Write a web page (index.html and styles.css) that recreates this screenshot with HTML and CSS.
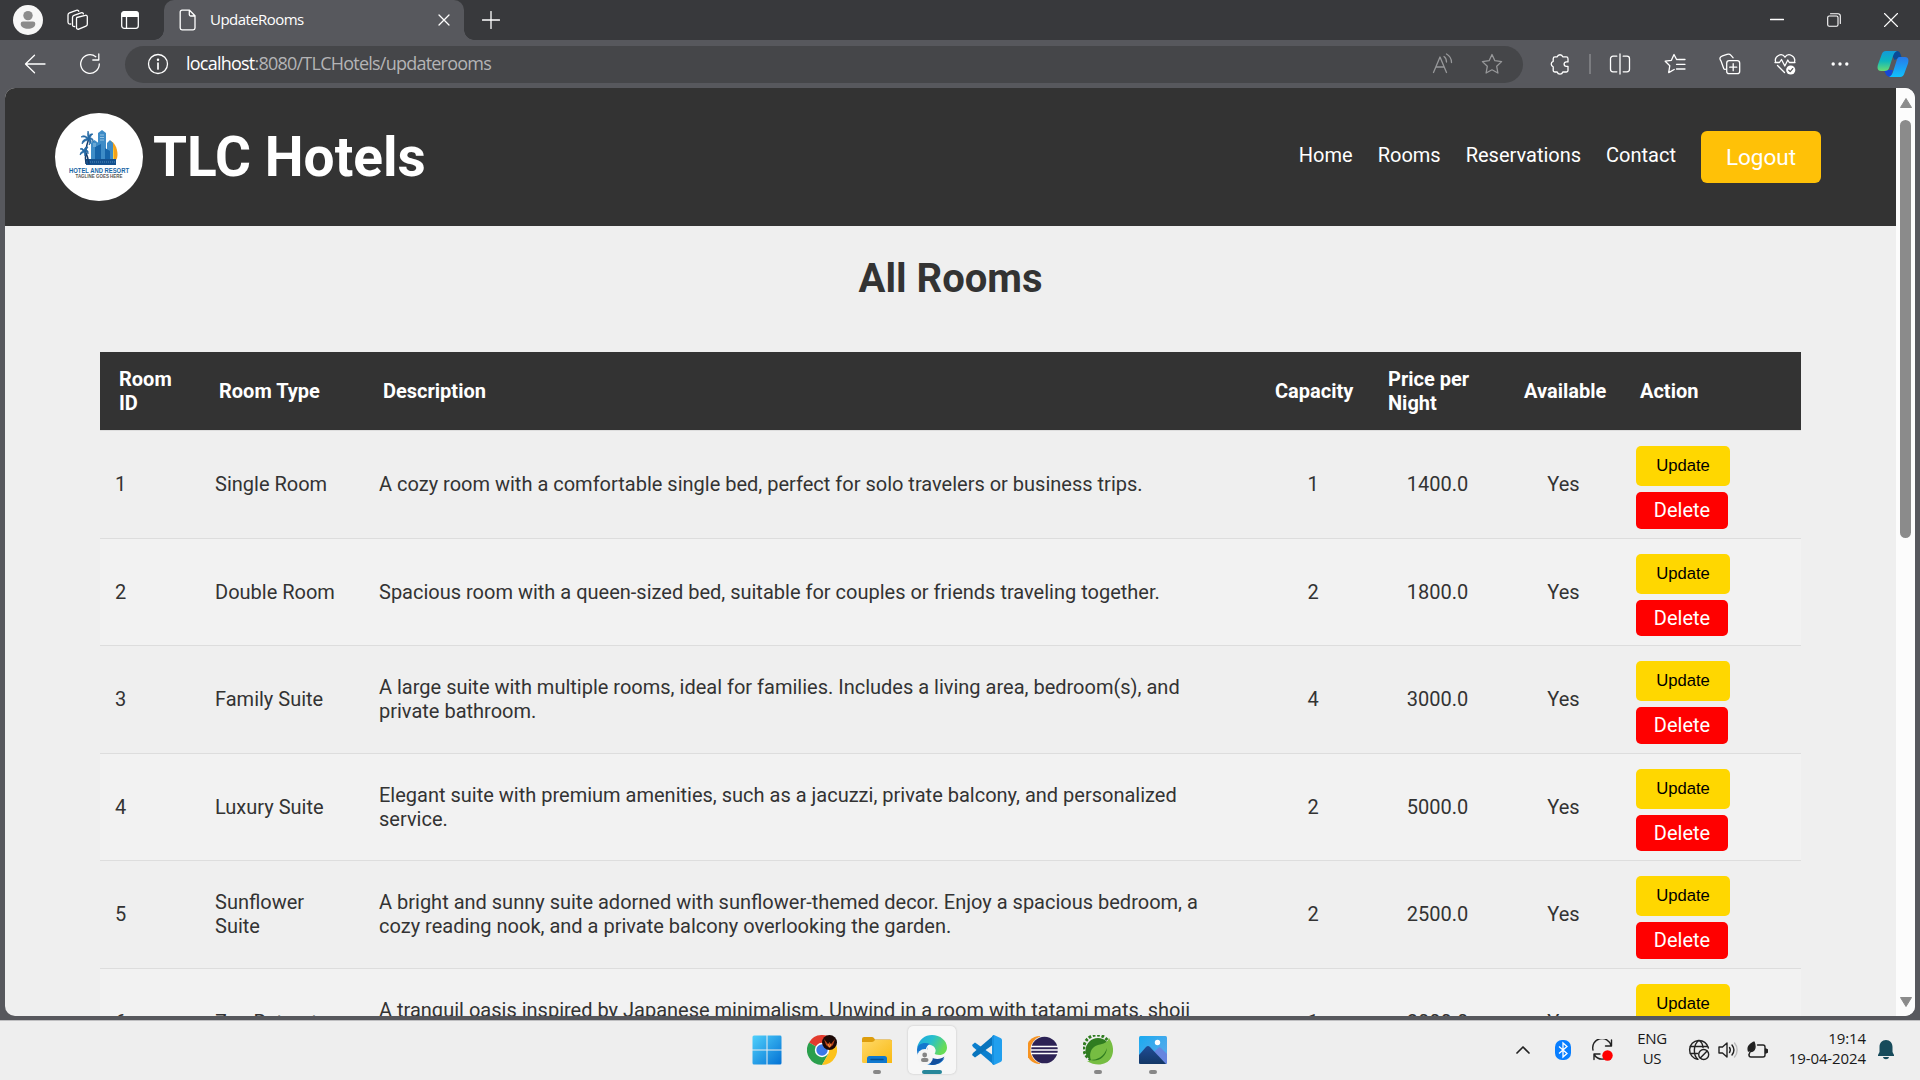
FILE: index.html
```html
<!DOCTYPE html>
<html lang="en">
<head>
<meta charset="utf-8">
<title>UpdateRooms</title>
<link rel="stylesheet" href="styles.css">
</head>
<body>
<div class="tabstrip">
  <div class="profile"><svg width="30" height="30" viewBox="0 0 30 30"><circle cx="15" cy="15" r="15" fill="#f7f7f7"/><circle cx="15" cy="10.600" r="4.700" fill="#8c8c8c"/><path d="M10 16.500h10a2.300 2.300 0 0 1 2.300 2.300c0 3.500-3.300 5-7.300 5s-7.300-1.500-7.300-5A2.300 2.300 0 0 1 10 16.500z" fill="#8c8c8c"/></svg></div>
  <div class="strip-icon"><svg class="line" width="22" height="22" viewBox="0 0 22 22"><path d="M9.700 8.500l8.600-2.200a1.500 1.500 0 0 1 2 1.400v7.500c0 1-.5 1.600-1.300 1.900l-7.200 3a1.600 1.600 0 0 1-2.300-1.500v-8.200c0-1 0-1.600.2-1.900z"/><path d="M7.700 17.500c-1.200.2-2.200-.3-2.200-1.600V8.500c0-1 .5-1.700 1.500-2.100l7-2.600c1.200-.4 2.200 0 2.400 1"/><path d="M3.700 15C2.200 15.300 1 14.600 1 13V6c0-1 .5-1.700 1.500-2.100l6.800-2.600c1.200-.4 2.200 0 2.500 1"/></svg></div>
  <div class="strip-icon tabact"><svg width="20" height="20" viewBox="0 0 20 20"><rect x="1.700" y="1.700" width="16.600" height="16.600" rx="2.500" fill="none" stroke="#fff" stroke-width="1.300"/><path d="M1.500 7V3.500a2 2 0 0 1 2-2h13a2 2 0 0 1 2 2V7z" fill="#fff"/><path d="M6.500 7v11" stroke="#fff" stroke-width="1.300"/></svg></div>
  <div class="tab">
    <svg class="line" width="18" height="22" viewBox="0 0 18 22"><path d="M3 1.200h7.500l5.500 5.500V19a1.800 1.800 0 0 1-1.800 1.800H3A1.800 1.800 0 0 1 1.200 19V3A1.800 1.800 0 0 1 3 1.200zM10.300 1.200V5.500a1.500 1.500 0 0 0 1.500 1.500H16"/></svg>
    <span class="tab-title">UpdateRooms</span>
    <svg class="line" width="12" height="12" viewBox="0 0 12 12"><path d="M1 1l10 10M11 1L1 11"/></svg>
  </div>
  <div class="newtab"><svg class="line" width="18" height="18" viewBox="0 0 18 18"><path d="M9 .5v17M.5 9h17"/></svg></div>
  <div class="window-buttons">
    <span><svg class="line" width="14" height="14" viewBox="0 0 14 14"><path d="M.5 6.500h13"/></svg></span>
    <span><svg class="line thin" width="14" height="14" viewBox="0 0 14 14"><rect x=".7" y="3" width="10.300" height="10.300" rx="1.500"/><path d="M3.500.7H11A2.300 2.300 0 0 1 13.300 3v7.500"/></svg></span>
    <span><svg class="line thin" width="14" height="14" viewBox="0 0 14 14"><path d="M.5.5l13 13M13.500.5l-13 13"/></svg></span>
  </div>
</div>

<div class="toolbar">
  <div class="tool"><svg class="line" width="22" height="20" viewBox="0 0 22 20"><path d="M21 10H2M10.500 1.200L1.500 10l9 8.800"/></svg></div>
  <div class="tool"><svg class="line" width="22" height="22" viewBox="0 0 22 22"><path d="M20.300 11A9.300 9.300 0 1 1 16.800 3.700M19.800 1v6h-6"/></svg></div>
  <div class="address">
    <svg class="line" width="22" height="22" viewBox="0 0 22 22"><circle cx="11" cy="11" r="9.500"/><path d="M11 10v6" stroke-width="1.700"/><circle cx="11" cy="6.800" r=".6" fill="#fff"/></svg>
    <span class="url"><b>localhost</b>:8080/TLCHotels/updaterooms</span>
    <svg class="line dim" width="22" height="22" viewBox="0 0 22 22"><path d="M1.500 19.500L8 4l6.500 15.500M4 14h8M12 3.500c1.700 1.200 2.500 3 2.500 5.500M14.500 1c3.500 2 5 4.500 5 8.500" /></svg>
    <svg class="line dim star" width="22" height="22" viewBox="0 0 22 22"><path d="M11 1.500l2.900 6.200 6.700.9-4.900 4.700 1.200 6.700-5.900-3.200L5.100 20l1.200-6.700L1.400 8.600l6.700-.9z"/></svg>
  </div>
  <div class="tool"><svg class="line" width="22" height="22" viewBox="0 0 22 22"><path d="M8.200 3.900a2.900 2.900 0 0 1 5.600 0h3.400A1.800 1.800 0 0 1 19 5.700v3.200h-1.700a2.200 2.200 0 0 0 0 4.400H19v3.900a1.800 1.800 0 0 1-1.800 1.800h-3.400a2.900 2.900 0 0 1-5.600 0H6a1.800 1.800 0 0 1-1.800-1.800v-3.400a2.900 2.900 0 0 1 0-5.500V5.700A1.800 1.800 0 0 1 6 3.900z"/></svg></div>
  <i class="divider"></i>
  <div class="tool"><svg class="line" width="22" height="22" viewBox="0 0 22 22"><path d="M11 1v20M7.800 3.200H4a2.500 2.500 0 0 0-2.500 2.500v10.600A2.500 2.500 0 0 0 4 18.800h3.800M14.200 3.200H18a2.500 2.500 0 0 1 2.500 2.500v10.600a2.500 2.500 0 0 1-2.500 2.500h-3.800"/></svg></div>
  <div class="tool"><svg class="line" width="22" height="22" viewBox="0 0 22 22"><path d="M13.500 6.500h-.9L10 1.500 7.400 7.300l-6.200.9 4.600 4.500L4.700 19.600l5.500-3.100M14.500 6.500H21M12.500 11.300H21M12.500 16H21"/></svg></div>
  <div class="tool"><svg class="line" width="22" height="22" viewBox="0 0 22 22"><rect x="7.700" y="7.700" width="13" height="13" rx="2.500"/><path d="M14.200 10.700v7M10.700 14.200h7M4.800 15.700L2 8A3.500 3.500 0 0 1 1 5c.3-1.300 1.300-1.700 2.500-2.200L8 1.300c1.700-.5 3-.2 4 1l2 2.400M7.500 16C6 16.500 5.200 16.400 4.800 15.700"/></svg></div>
  <div class="tool"><svg class="line" width="22" height="22" viewBox="0 0 22 22"><path d="M1.500 8.500C.3 3.500 7.500-1.200 11 4.200c3.500-5.400 10.700-.7 9.600 4.300M1 9.500h4.500l2-3 3.300 6.500 3-6 1.500 2.500H21M3.500 12.500l7 7"/><circle cx="16.700" cy="17" r="4.600" fill="#fff" stroke="none"/><path d="M14.800 17.200l1.400 1.400 2.500-3" stroke="#555"/></svg></div>
  <div class="tool"><svg width="18" height="6" viewBox="0 0 18 6" fill="#fff"><circle cx="2.200" cy="3" r="1.700"/><circle cx="9" cy="3" r="1.700"/><circle cx="15.800" cy="3" r="1.700"/></svg></div>
  <div class="copilot"><svg width="32" height="30" viewBox="0 0 32 30"><defs><linearGradient id="ca" x1="0" y1="0" x2="0" y2="1"><stop offset="0" stop-color="#129ad9"/><stop offset=".5" stop-color="#0db6bd"/><stop offset="1" stop-color="#68dc72"/></linearGradient><linearGradient id="cb" x1="0" y1="0" x2="0" y2="1"><stop offset="0" stop-color="#2879e9"/><stop offset="1" stop-color="#10c0fc"/></linearGradient></defs><path d="M13 2h7c3 0 3.500 3 4.500 6l-7 3z" fill="#0a4a97"/><path d="M7 21h9l-2 7c-4 0-5-2-7-7z" fill="#1648d6"/><path d="M9 2h11c-2.500 1-3.300 3-4.300 6l-3.200 10c-1 3-2.500 4-5 4H4c-3.500 0-4-3-3-6.500L4.500 6C5.300 3.500 6.500 2 9 2z" fill="url(#ca)"/><path d="M22.500 8H28c3.500 0 4 3 3 6.500L27.500 24c-.8 2.500-2 4-4.500 4H12c2.500-1 3.300-3 4.300-6l3-9.500c1-3 1.500-4.500 3.200-4.500z" fill="url(#cb)"/></svg></div>
</div>

<div class="frame">
  <div class="viewport">
    <div class="page">
      <header class="site-header">
        <div class="brand">
          <svg class="logo" width="88" height="88" viewBox="0 0 88 88">
            <circle cx="44" cy="44" r="44" fill="#fff"/>
            <path d="M56 28c5 3 6.500 9 6.500 14q0 3-1.500 5h-5z" fill="#f5a21b"/><path d="M56 28c2 3 3 8 3 19h-3z" fill="#ffd43d"/>
            <path d="M43 47V20l4-3 4 3v27zM36 47V30l3.500-3 4 3v17zM52 47V30l3-3 3 3v17z" fill="#3e8cc7"/>
            <path d="M40 47V34l6-3v16zM50 47V35l5 3v9z" fill="#1765aa"/>
            <path d="M45 22h4M45 24.500h4M45 27h4M38 31h3M38 33h3" stroke="#a9cfe9" stroke-width=".8"/>
            <path d="M31 46h30v6H31z" fill="#14518f"/><path d="M31 49h30" stroke="#5d9bc8" stroke-width=".8" stroke-dasharray="1 1"/>
            <path d="M31 51q-2-12 3-26M34 51q-1-7-4-14" fill="none" stroke="#163d6b" stroke-width="1.500"/>
            <path d="M33 25q-4-4-7-1 4-1 6 2-5 0-5 5 3-4 7-4 1 3 0 5 4-3 1-6 3 0 3 3 1-4-3-4 1-3 3-4-3-1-4 2 0-3-1-5-1 3 0 7zM29 37q-2-3-4-1 2 0 3 2-3 1-3 4 2-2 4-3l1 4q2-3 0-5 3 0 3 3 1-4-2-4l2-3q-3-1-4 3z" fill="#2469a5" stroke="#2469a5" stroke-width=".7"/>
            <text x="44" y="59.500" text-anchor="middle" class="logo-name" textLength="60" lengthAdjust="spacingAndGlyphs">HOTEL AND RESORT</text>
            <text x="44" y="64.500" text-anchor="middle" class="logo-tag" textLength="47" lengthAdjust="spacingAndGlyphs">TAGLINE GOES HERE</text>
          </svg>
          <h1>TLC Hotels</h1>
        </div>
        <nav><a>Home</a><a>Rooms</a><a>Reservations</a><a>Contact</a><a class="logout">Logout</a></nav>
      </header>
      <h2>All Rooms</h2>
      <table>
        <colgroup><col class="c-id"><col class="c-type"><col><col class="c-cap"><col class="c-price"><col class="c-av"><col class="c-act"></colgroup>
        <thead><tr><th>Room<br>ID</th><th>Room Type</th><th>Description</th><th>Capacity</th><th>Price per<br>Night</th><th>Available</th><th>Action</th></tr></thead>
        <tbody>
          <tr><td>1</td><td>Single Room</td><td>A cozy room with a comfortable single bed, perfect for solo travelers or business trips.</td><td class="num">1</td><td class="num">1400.0</td><td class="num">Yes</td><td class="actions"><button class="update">Update</button><a class="delete">Delete</a></td></tr>
          <tr><td>2</td><td>Double Room</td><td>Spacious room with a queen-sized bed, suitable for couples or friends traveling together.</td><td class="num">2</td><td class="num">1800.0</td><td class="num">Yes</td><td class="actions"><button class="update">Update</button><a class="delete">Delete</a></td></tr>
          <tr><td>3</td><td>Family Suite</td><td>A large suite with multiple rooms, ideal for families. Includes a living area, bedroom(s), and private bathroom.</td><td class="num">4</td><td class="num">3000.0</td><td class="num">Yes</td><td class="actions"><button class="update">Update</button><a class="delete">Delete</a></td></tr>
          <tr><td>4</td><td>Luxury Suite</td><td>Elegant suite with premium amenities, such as a jacuzzi, private balcony, and personalized service.</td><td class="num">2</td><td class="num">5000.0</td><td class="num">Yes</td><td class="actions"><button class="update">Update</button><a class="delete">Delete</a></td></tr>
          <tr><td>5</td><td>Sunflower Suite</td><td>A bright and sunny suite adorned with sunflower-themed decor. Enjoy a spacious bedroom, a cozy reading nook, and a private balcony overlooking the garden.</td><td class="num">2</td><td class="num">2500.0</td><td class="num">Yes</td><td class="actions"><button class="update">Update</button><a class="delete">Delete</a></td></tr>
          <tr><td>6</td><td>Zen Retreat</td><td>A tranquil oasis inspired by Japanese minimalism. Unwind in a room with tatami mats, shoji screens, and a private garden.</td><td class="num">1</td><td class="num">2000.0</td><td class="num">Yes</td><td class="actions"><button class="update">Update</button><a class="delete">Delete</a></td></tr>
        </tbody>
      </table>
    </div>
    <div class="scrollbar">
      <svg width="12" height="10" viewBox="0 0 12 10"><path d="M6 .5L11.500 9.500H.5z" fill="#8b8b8b" stroke="#8b8b8b" stroke-linejoin="round"/></svg>
      <i class="thumb"></i>
      <svg class="down" width="12" height="10" viewBox="0 0 12 10"><path d="M6 9.500L11.500.5H.5z" fill="#8b8b8b" stroke="#8b8b8b" stroke-linejoin="round"/></svg>
    </div>
  </div>
</div>

<div class="taskbar">
  <div class="apps">
    <div class="app"><svg width="30" height="30" viewBox="0 0 30 30"><defs><linearGradient id="w" x1="0" y1="0" x2="1" y2="1"><stop offset="0" stop-color="#4fd0fb"/><stop offset="1" stop-color="#0371d4"/></linearGradient></defs><path d="M2 .5h12.500v14H.5V2A1.500 1.500 0 0 1 2 .5zM15.500.5H28A1.500 1.500 0 0 1 29.500 2v12.500h-14zM.5 15.500h14v14H2A1.500 1.500 0 0 1 .5 28zM15.500 15.500h14V28a1.500 1.500 0 0 1-1.500 1.500H15.500z" fill="url(#w)"/></svg></div>
    <div class="app"><svg width="30" height="30" viewBox="0 0 30 30"><path d="M15 15L2 7.500A15 15 0 0 1 28 7.500z" fill="#e33b2e"/><path d="M15 15L2 7.500A15 15 0 0 0 15 30l6.500-11.300z" fill="#2a9f4c"/><path d="M15 15l6.500 3.700L15 30A15 15 0 0 0 28 7.500H15z" fill="#fcc21b"/><circle cx="15" cy="15" r="7.200" fill="#fff"/><circle cx="15" cy="15" r="5.700" fill="#3b78e7"/><circle cx="22.500" cy="7.500" r="7.500" fill="#1b0806"/><path d="M17 4l4 5 1.500-2L24 9l4-5-2 6-3.500 3-3.500-3z" fill="#b8431b"/><path d="M21 9l1.500 3L24 9" stroke="#f4a13d" fill="none"/></svg></div>
    <div class="app"><svg width="30" height="28" viewBox="0 0 30 28"><defs><linearGradient id="f" x1="0" y1="0" x2="1" y2="1"><stop offset="0" stop-color="#ffd968"/><stop offset="1" stop-color="#f9b912"/></linearGradient></defs><path d="M0 7V3a2 2 0 0 1 2-2h8c1.500 0 2 1 3 2.500h15a2 2 0 0 1 2 2V9H0z" fill="#dd9d0c"/><path d="M0 6h10q1.500 0 3-2h15.500A1.500 1.500 0 0 1 30 5.500V27H1.500A1.500 1.500 0 0 1 0 25.500z" fill="url(#f)"/><path d="M5 27v-4.500a2.500 2.500 0 0 1 2.500-2.500h15a2.500 2.500 0 0 1 2.500 2.500V27z" fill="#0f78cf"/><path d="M9 23.500h12" stroke="#064f91" stroke-width="1.500" stroke-linecap="round"/></svg><i class="dot"></i></div>
    <div class="app active"><svg width="30" height="30" viewBox="0 0 30 30"><defs><linearGradient id="e1" x1="0" y1="0" x2="1" y2=".4"><stop offset="0" stop-color="#1ba5e0"/><stop offset=".5" stop-color="#28bfce"/><stop offset="1" stop-color="#67dc56"/></linearGradient></defs><path d="M0 13C2 4 8 0 15 0c8 0 15 5.500 15 12.500 0 5-4 7.500-7.500 7.500-3 0-5-1-5.500-2 2-1.500 2-5-1-7C11 8 3 9 0 13z" fill="url(#e1)"/><path d="M0 15c0-6 7-8.500 13-6-4 2-5 6-4 10 1.500 5 5 7.500 10 7.500 3 0 5.500-1 8.500-3.500C25 28 20 30 15 30 6 30 0 23 0 15z" fill="#1477ce"/><path d="M11 12c-2 6 1 10 6 11.500 4 1 8 0 10.500-2C25 27 20 30 15 30c-6-2-8-9-4-18z" fill="#134f9d"/><circle cx="8" cy="22" r="8" fill="#f5f5f5"/><circle cx="15" cy="16" r="3.500" fill="#f7f7f7"/><circle cx="7.700" cy="20" r="2.400" fill="#858585"/><rect x="4" y="23" width="7.500" height="4" rx="2" fill="#858585"/></svg><i class="dot"></i></div>
    <div class="app"><svg width="30" height="30" viewBox="0 0 30 30"><path d="M0 10l3-2.500L22 21v9L1 12z" fill="#0b7fce"/><path d="M0 20l3 2.500L22 9V0L1 18z" fill="#0874bd"/><path d="M22 0l6.500 3A2.500 2.500 0 0 1 30 5v20a2.500 2.500 0 0 1-1.500 2L22 30z" fill="#219fee"/><path d="M22 0v30l-2-1V1z" fill="#1791e0"/></svg></div>
    <div class="app"><svg width="30" height="28" viewBox="0 0 30 28"><path d="M12 0a14 14 0 1 0 0 28z" fill="#f79321"/><circle cx="16.500" cy="14" r="14" fill="#eee"/><circle cx="16.500" cy="14" r="13.300" fill="#2c2255"/><path d="M3 10.500h27M3 14h27M3 17.500h27" stroke="#fff" stroke-width="1.700"/></svg></div>
    <div class="app"><svg width="30" height="30" viewBox="0 0 30 30"><path d="M8 25A13.200 13.200 0 1 1 25 6" fill="none" stroke="#2f7c20" stroke-width="3" stroke-dasharray="2.700 1.700"/><circle cx="15" cy="15.500" r="12.500" fill="#2f7c20"/><path d="M26 3c5 7 5 15 2 20-4 7-15 9-24 3 2 .5 4-1 4-1C6 21 7 12 15 10c6-1.500 9-2 11-7z" fill="#76bd42"/><path d="M7 25c7 0 14-3 17-12-1 10-9 14-17 12z" fill="#2f7c20"/></svg><i class="dot"></i></div>
    <div class="app"><svg width="28" height="28" viewBox="0 0 28 28"><defs><linearGradient id="p" x1="0" y1="0" x2="1" y2="1"><stop offset="0" stop-color="#1aaaf0"/><stop offset="1" stop-color="#65a9e9"/></linearGradient><linearGradient id="p2" x1="0" y1="0" x2="0" y2="1"><stop offset="0" stop-color="#204c96"/><stop offset="1" stop-color="#123766"/></linearGradient></defs><rect width="28" height="28" rx="1.500" fill="url(#p)"/><path d="M15 16l4-4q1.500-1.500 3 0l6 6v8.500q0 1.500-1.500 1.500H15z" fill="#6785df"/><path d="M0 19l7-8q2-2 4 0l16 17H1.500Q0 28 0 26.500z" fill="url(#p2)"/><circle cx="18.500" cy="6.500" r="2.700" fill="#fff"/></svg><i class="dot"></i></div>
  </div>
  <div class="tray">
    <svg class="ink" width="14" height="9" viewBox="0 0 14 9"><path d="M1 8l6-6 6 6" stroke-width="1.700"/></svg>
    <svg class="bt" width="16" height="20" viewBox="0 0 16 20"><rect width="16" height="20" rx="7" fill="#087eff"/><path d="M4 6.500l8 7-4 3.500V3l4 3.500-8 7" fill="none" stroke="#fff" stroke-width="1.300"/></svg>
    <svg class="ink sync" width="22" height="22" viewBox="0 0 22 22"><path d="M1 11A9 9 0 0 1 19 6.500M19.500 1v6h-6M2 20.500V15h6M2.500 16c2 3 5 4.500 9 4"/><circle cx="15.500" cy="16.500" r="5.200" fill="#f00" stroke="none"/></svg>
    <div class="lang"><div>ENG</div><div>US</div></div>
    <svg class="ink globe" width="22" height="22" viewBox="0 0 22 22"><path d="M9.500 20.300A9.500 9.500 0 1 1 20.400 9M10 20.300C5 17 5 5 11 1.500c2.500 1.500 3.800 4 4 7M2 7.500h18M2 14.500h7.500"/><circle cx="15.700" cy="15.500" r="5"/><path d="M12.300 19l6.800-7"/></svg>
    <svg class="ink" width="20" height="18" viewBox="0 0 20 18"><path d="M1 6h3.500L9 2v14L4.500 12H1zM11.500 6.500c1 1.500 1 3.500 0 5M14 4c2.300 3 2.300 7 0 10"/><path d="M16.500 2c3.500 4 3.500 10 0 14" stroke="#bbb"/></svg>
    <svg class="ink batt" width="21" height="18" viewBox="0 0 21 18"><path d="M10.500 4H16a2 2 0 0 1 2 2v8a2 2 0 0 1-2 2H4a2 2 0 0 1-2-2"/><path d="M18.500 8v4l2-1V9z" fill="#222"/><path d="M1.500 10C0 5 3 3.500 7 1c2 5 1 9-3.500 9.500M5.500 5L2 13.500" fill="#222"/></svg>
    <div class="clock"><div>19:14</div><div>19-04-2024</div></div>
    <svg class="bell" width="18" height="20" viewBox="0 0 18 20"><path d="M9 0c4 0 6.500 3 6.500 7v5l1.500 3v1H1v-1l1.500-3V7c0-4 2.500-7 6.500-7zM6 17h6c-.5 3-5.500 3-6 0z" fill="#174b5b"/></svg>
  </div>
</div>
</body>
</html>
```
FILE: styles.css
```css
* { box-sizing: border-box; }
body {
  margin: 0; width: 1920px; height: 1080px; overflow: hidden;
  display: flex; flex-direction: column;
  background: #57585d; color: #333;
  font: 20px Roboto, sans-serif;
}
svg { display: block; flex: none; }
.line { fill: none; stroke: #fff; stroke-width: 1.3; stroke-linecap: round; stroke-linejoin: round; }
.thin { stroke-width: 1.1; }
.dim { stroke: #97989a; }
.ink { fill: none; stroke: #222; stroke-width: 1.4; stroke-linecap: round; stroke-linejoin: round; }

.tabstrip { height: 40px; background: #38393c; display: flex; align-items: center; padding-left: 13px; }
.strip-icon { margin-left: 24px; }
.tabact { margin-left: 31px; }
.tab {
  width: 300px; height: 40px; margin-left: 24px; padding: 0 14px 0 15px;
  display: flex; align-items: center; position: relative;
  background: #57585d; border-radius: 10px 10px 0 0; color: #fff;
}
.tab::before, .tab::after { content: ""; position: absolute; bottom: 0; width: 10px; height: 10px; }
.tab::before { left: -10px; background: radial-gradient(circle at 0 0, #38393c 9.5px, #57585d 10px); }
.tab::after { right: -10px; background: radial-gradient(circle at 100% 0, #38393c 9.5px, #57585d 10px); }
.tab-title { font: 15px "Open Sans", sans-serif; letter-spacing: -.55px; margin-left: 13px; padding-bottom: 2px; flex: 1; }
.newtab { margin-left: 18px; }
.window-buttons { margin-left: auto; padding-right: 1px; display: flex; }
.window-buttons span { width: 57px; display: flex; justify-content: center; }

.toolbar { height: 48px; display: flex; align-items: center; padding-left: 7px; }
.tool { width: 55px; display: flex; justify-content: center; flex: none; }
.copilot { width: 51px; display: flex; justify-content: center; flex: none; }
.address {
  width: 1398px; height: 37px; margin: 0 9px 0 8px; padding: 0 20px 0 22px; flex: none;
  display: flex; align-items: center; border-radius: 19px; background: #454649;
}
.url { font: 18px "Open Sans", sans-serif; letter-spacing: -.77px; color: #b4b4b6; margin-left: 17px; padding-bottom: 2px; flex: 1; }
.url b { font-weight: 400; color: #fff; }
.star { margin-left: 27px; }
.divider { width: 2px; height: 20px; margin: 0 1px 0 2px; background: #7b7c80; flex: none; }

.frame { height: 932px; padding: 0 5px 4px; }
.viewport { height: 928px; display: flex; border-radius: 10px; overflow: hidden; background: #efefef; }
.page { width: 1891px; height: 928px; overflow: hidden; }
.scrollbar { width: 19px; background: #fcfcfc; display: flex; flex-direction: column; align-items: center; padding: 10px 0 9px; }
.thumb { width: 11px; height: 418px; margin-top: 12px; border-radius: 6px; background: #8b8b8b; }
.down { margin-top: auto; }

.site-header { height: 138px; background: #333; color: #fff; display: flex; justify-content: space-between; align-items: center; padding: 0 75px 0 50px; }
.brand { display: flex; align-items: center; gap: 10px; }
.logo-name { font: bold 7px "Liberation Sans", sans-serif; fill: #1765a5; }
.logo-tag { font: bold 4.6px "Liberation Sans", sans-serif; fill: #555; }
h1 { margin: 0; font-size: 55px; font-weight: 700; line-height: 64px; }
nav { display: flex; align-items: center; gap: 25px; }
nav a { padding-bottom: 4px; }
nav .logout { width: 120px; height: 52px; border-radius: 6px; background: #ffc107; font-size: 22.5px; line-height: 53px; text-align: center; padding: 0; }
h2 { margin: 29px 0 0; height: 47px; line-height: 47px; font-size: 40px; font-weight: 700; text-align: center; }

table { width: 1701px; margin: 50px 0 0 95px; table-layout: fixed; border-collapse: separate; border-spacing: 0; }
.c-id { width: 100px; }
.c-type { width: 164px; }
.c-cap { width: 113px; }
.c-price { width: 136px; }
.c-av { width: 116px; }
.c-act { width: 180px; }
th, td { border-bottom: 1px solid #ddd; text-align: left; vertical-align: middle; line-height: 24px; padding: 0 15px; }
th { height: 79px; background: #333; background-clip: padding-box; color: #fff; padding: 0 0 0 19px; white-space: nowrap; }
td { height: 108px; padding-bottom: 2px; }
tr:nth-child(even) td { height: 107px; padding-bottom: 0; background: #f2f2f2; }
td.num { text-align: center; padding-left: 16px; }
td.actions { vertical-align: top; padding-top: 15px; }
.update { display: block; width: 94px; height: 40px; border: 0; border-radius: 5px; background: gold; color: #000; padding: 0; font: 16.67px "Liberation Sans", sans-serif; }
.delete { display: block; width: 92px; height: 37px; margin-top: 6px; border-radius: 5px; background: red; color: #fff; line-height: 37px; text-align: center; }
tr:nth-child(even) .delete { height: 36px; }

.taskbar { height: 60px; background: #eee; border-top: 1px solid #bfbfc1; display: flex; justify-content: space-between; padding: 0 25px 2px 739px; }
.apps { display: flex; align-items: center; }
.app { width: 55.2px; height: 48px; display: flex; align-items: center; justify-content: center; position: relative; }
.active { width: 48px; margin: 0 3.6px; background: #f7f7f7; border-radius: 5px; box-shadow: 0 0 2px #bbb; }
.dot { position: absolute; bottom: 0; width: 8px; height: 4px; border-radius: 2px; background: #878787; }
.active .dot { width: 20px; background: #27879a; }
.tray { display: flex; align-items: center; font: 15px/20px "Open Sans", sans-serif; color: #191919; }
.bt { margin-left: 25px; }
.sync { margin-left: 21px; }
.lang { width: 36px; margin: 0 18px 3px 20px; text-align: center; letter-spacing: -.3px; }
.globe { margin-right: 8px; }
.batt { margin-left: 9px; }
.clock { width: 85px; margin: 0 11px 3px 13px; text-align: right; letter-spacing: -.1px; white-space: nowrap; }
```
